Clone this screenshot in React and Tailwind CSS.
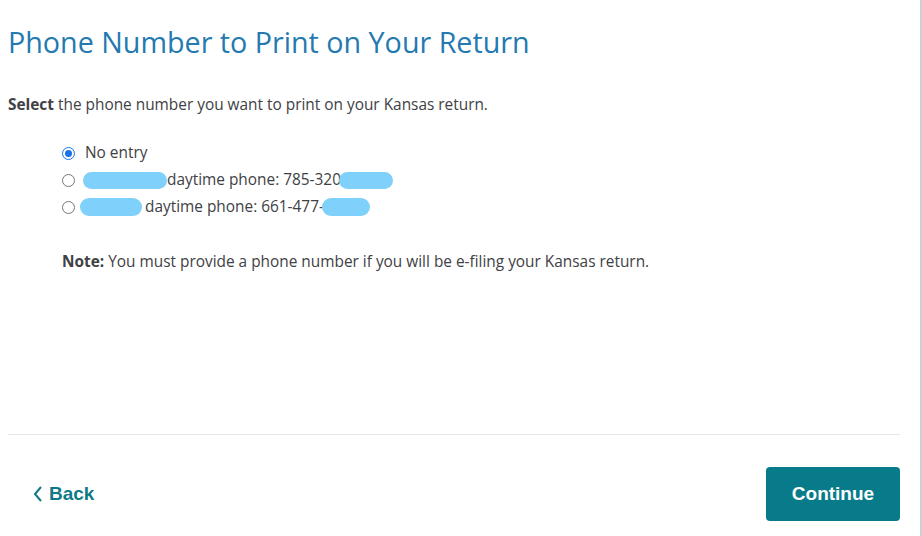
import React from 'react';

function Radio({ checked }) {
  return checked ? (
    <span className="w-[13px] h-[13px] rounded-full border border-[#1a73e8] flex items-center justify-center shrink-0">
      <span className="w-[7px] h-[7px] rounded-full bg-[#1a73e8]" />
    </span>
  ) : (
    <span className="w-[13px] h-[13px] rounded-full border border-[#767676] bg-white shrink-0" />
  );
}

function Blob({ className }) {
  return <span className={`inline-block rounded-full bg-[#7fd0fa] ${className}`} />;
}

export default function App() {
  return (
    <div className="w-[922px] h-[536px] bg-white border-r-2 border-[#cfcfcf] flex flex-col font-['Open_Sans',sans-serif] text-[#404144]">
      <div className="px-2 pt-[24px] flex-1">
        <h1 className="text-[28.7px] leading-[36px] text-[#2379b0]">Phone Number to Print on Your Return</h1>
        <p className="mt-[35px] text-[15.4px] leading-5">
          <span className="font-bold">Select</span> the phone number you want to print on your Kansas return.
        </p>
        <div className="mt-[28px] pl-[54px] flex flex-col gap-[7px] text-[15.4px] leading-5">
          <label className="flex items-center gap-[10px]">
            <Radio checked />
            <span>No entry</span>
          </label>
          <label className="flex items-center gap-[10px]">
            <Radio />
            <span className="flex items-center">
              <Blob className="w-[84px] h-[17px] -ml-[2px]" />
              <span>daytime phone: 785-320</span>
              <Blob className="w-[54px] h-[17px] -ml-[2px]" />
            </span>
          </label>
          <label className="flex items-center gap-[10px]">
            <Radio />
            <span className="flex items-center">
              <Blob className="w-[62px] h-[18px] -ml-[5px]" />
              <span className="ml-[3px]">daytime phone: 661-477-</span>
              <Blob className="w-[48px] h-[18px] -ml-[2px]" />
            </span>
          </label>
        </div>
        <p className="mt-[35px] pl-[54px] text-[15.4px] leading-5">
          <span className="font-bold">Note:</span> You must provide a phone number if you will be e-filing your Kansas return.
        </p>
      </div>
      <div className="mx-2 mr-[20px] border-t border-[#e6e6e6]" />
      <div className="h-[101px] flex items-start justify-between pl-[32px] pr-[20px] pt-[32px] font-['Liberation_Sans',sans-serif]">
        <button className="mt-[13px] flex items-center gap-[5px] text-[#0f7a87] font-bold text-[19px]">
          <svg width="12" height="18" viewBox="0 0 12 18" fill="none" stroke="#0f7a87" strokeWidth="2">
            <path d="M9 2 L3 9 L9 16" />
          </svg>
          Back
        </button>
        <button className="w-[134px] h-[54px] rounded-[4px] bg-[#077b89] text-white font-bold text-[19px]">Continue</button>
      </div>
    </div>
  );
}
